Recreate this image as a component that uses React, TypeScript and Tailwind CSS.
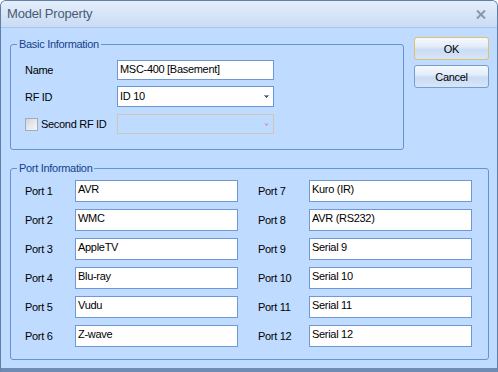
import React from "react";

const ports: [string, string][] = [
  ["Port 1", "AVR"],
  ["Port 2", "WMC"],
  ["Port 3", "AppleTV"],
  ["Port 4", "Blu-ray"],
  ["Port 5", "Vudu"],
  ["Port 6", "Z-wave"],
  ["Port 7", "Kuro (IR)"],
  ["Port 8", "AVR (RS232)"],
  ["Port 9", "Serial 9"],
  ["Port 10", "Serial 10"],
  ["Port 11", "Serial 11"],
  ["Port 12", "Serial 12"],
];

function Arrow({ color, light }: { color: string; light: string }) {
  return (
    <svg width="5" height="3" viewBox="0 0 5 3" className="block">
      <rect x="0" y="0" width="5" height="1" fill={light} />
      <rect x="1" y="1" width="3" height="1" fill={color} />
      <rect x="2" y="2" width="1" height="1" fill={color} />
    </svg>
  );
}

function PortColumn({ items, labelW }: { items: [string, string][]; labelW: string }) {
  return (
    <div className="flex flex-col gap-[7px]">
      {items.map(([label, value]) => (
        <div key={label} className="flex items-center">
          <div className={`${labelW} text-[11px] leading-[14px] tracking-[-0.3px] text-black`}>{label}</div>
          <div className="h-[22px] w-[163px] border border-[#7098d2] bg-white px-[2px] pt-[1px] text-[11px] leading-[14px] tracking-[-0.3px] text-black whitespace-nowrap">
            {value}
          </div>
        </div>
      ))}
    </div>
  );
}

function Button({ label, def }: { label: string; def?: boolean }) {
  return (
    <div
      className={`flex h-[23px] w-[75px] items-center justify-center rounded-[3px] border ${
        def ? "border-[#e2c06a]" : "border-[#7b9dca]"
      } bg-[linear-gradient(to_bottom,#f6f9fe_0%,#e3edfb_40%,#cadcf4_55%,#d6e6fa_100%)] text-[11px] leading-[14px] tracking-[-0.3px] text-black`}
    >
      {label}
    </div>
  );
}

export default function App() {
  return (
    <div className="flex h-[372px] w-[498px] flex-col overflow-hidden rounded-t-[6px] border border-[#5f7ea8] border-b-[4px] border-b-[#6f8cb4] bg-[#bfdbff] font-['Liberation_Sans',Arial,sans-serif]">
      {/* Title bar */}
      <div className="flex h-[27px] shrink-0 items-center justify-between border-b border-b-[#a9c5ea] bg-[linear-gradient(to_bottom,#e5effb_0%,#d6e5f8_50%,#cadcf4_100%)] pl-[6px] pr-[11px]">
        <span className="text-[13px] leading-[16px] tracking-[-0.2px] text-[#4a5b73]">Model Property</span>
        <svg width="10" height="9" viewBox="0 0 10 9" className="block">
          <path d="M1 0.5 L9 8.5 M9 0.5 L1 8.5" stroke="#8697ad" strokeWidth="2" />
        </svg>
      </div>

      {/* Body */}
      <div className="flex flex-1 flex-col pl-[9px] pt-[9px]">
        <div className="flex items-start">
          <fieldset className="w-[394px] rounded-[3px] border border-[#6593cf] px-[6px] pb-[15px]">
            <legend className="px-[2px] text-[11px] leading-[14px] tracking-[-0.3px] text-[#15428b]">Basic Information</legend>
            <div className="flex flex-col pl-[8px] pt-[9px]">
              <div className="flex items-center">
                <div className="w-[92px] text-[11px] leading-[14px] tracking-[-0.3px] text-black">Name</div>
                <div className="h-[20px] w-[157px] border border-[#7098d2] bg-white px-[2px] pt-[1px] text-[11px] leading-[14px] tracking-[-0.3px] text-black whitespace-nowrap">
                  MSC-400 [Basement]
                </div>
              </div>
              <div className="mt-[6px] flex items-center">
                <div className="w-[92px] text-[11px] leading-[14px] tracking-[-0.3px] text-black">RF ID</div>
                <div className="flex h-[21px] w-[157px] items-center justify-between border border-[#6b95d0] bg-white pl-[2px] pr-[4px]">
                  <span className="self-start pt-[2px] text-[11px] leading-[14px] tracking-[-0.3px] text-black">ID 10</span>
                  <Arrow color="#3d5a98" light="#7d97c8" />
                </div>
              </div>
              <div className="mt-[7px] flex items-center">
                <div className="flex w-[92px] items-center">
                  <div className="h-[13px] w-[13px] border border-[#a2abba] bg-[linear-gradient(135deg,#cfd3da_0%,#e6e8ec_50%,#f7f7f7_100%)]" />
                  <span className="ml-[3px] text-[11px] leading-[14px] tracking-[-0.3px] text-black">Second RF ID</span>
                </div>
                <div className="flex h-[20px] w-[157px] items-center justify-end border border-[#cdc7b3] pr-[4px]">
                  <Arrow color="#c79ec2" light="#d9bcd6" />
                </div>
              </div>
            </div>
          </fieldset>
          <div className="ml-[10px] flex flex-col gap-[5px]">
            <Button label="OK" def />
            <Button label="Cancel" />
          </div>
        </div>

        <fieldset className="mt-[11px] w-[479px] rounded-[3px] border border-[#6593cf] px-[6px] pb-[12px]">
          <legend className="px-[2px] text-[11px] leading-[14px] tracking-[-0.3px] text-[#15428b]">Port Information</legend>
          <div className="flex gap-[20px] pl-[8px] pt-[5px]">
            <PortColumn items={ports.slice(0, 6)} labelW="w-[50px]" />
            <PortColumn items={ports.slice(6)} labelW="w-[51px]" />
          </div>
        </fieldset>
      </div>
    </div>
  );
}
